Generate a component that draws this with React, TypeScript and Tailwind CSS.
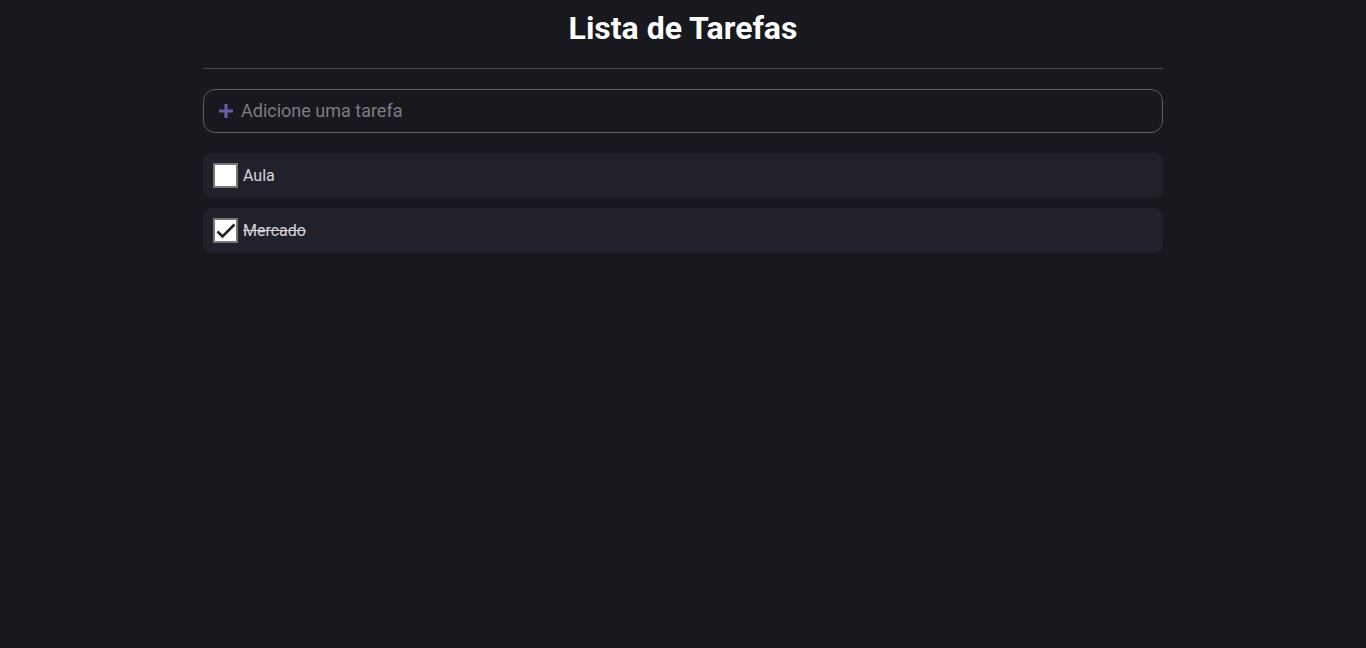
import { useState } from 'react';

type Tarefa = { id: number; texto: string; feita: boolean };

export default function App() {
  const [tarefas, setTarefas] = useState<Tarefa[]>([
    { id: 1, texto: 'Aula', feita: false },
    { id: 2, texto: 'Mercado', feita: true },
  ]);
  const [nova, setNova] = useState('');

  const alternar = (id: number) =>
    setTarefas(tarefas.map((t) => (t.id === id ? { ...t, feita: !t.feita } : t)));

  const adicionar = (e: React.FormEvent) => {
    e.preventDefault();
    if (!nova.trim()) return;
    setTarefas([...tarefas, { id: Date.now(), texto: nova, feita: false }]);
    setNova('');
  };

  return (
    <div className="min-h-screen bg-[#18181f] font-['Roboto',sans-serif]">
      <div className="mx-auto w-[960px]">
        <h1 className="pt-[8px] pb-[19px] text-center text-[32px] font-bold leading-[41px] text-white">
          Lista de Tarefas
        </h1>
        <div className="h-px bg-[#46464c]" />

        <form
          onSubmit={adicionar}
          className="mt-5 flex h-[44px] items-center gap-[7px] rounded-xl border border-[#5c5c63] px-[14px]"
        >
          <svg width="16" height="16" viewBox="0 0 16 16" className="shrink-0">
            <path d="M8 1v14M1 8h14" stroke="#6e5ca8" strokeWidth="3" />
          </svg>
          <input
            value={nova}
            onChange={(e) => setNova(e.target.value)}
            placeholder="Adicione uma tarefa"
            className="flex-1 bg-transparent text-lg text-[#d4d4d8] placeholder-[#7c7c85] outline-none"
          />
        </form>

        <ul className="mt-5 space-y-[10px]">
          {tarefas.map((t) => (
            <li
              key={t.id}
              className="flex h-[45px] items-center gap-[5px] rounded-lg bg-[#21212c] px-[10px]"
            >
              <button
                onClick={() => alternar(t.id)}
                className="flex h-[25px] w-[25px] items-center justify-center border-[2.5px] border-[#767676] bg-white"
              >
                {t.feita && (
                  <svg width="20" height="20" viewBox="0 0 20 20">
                    <path d="M1.5 10.5l5 5L18.5 3.5" fill="none" stroke="#222" strokeWidth="2.6" />
                  </svg>
                )}
              </button>
              <span className={`text-base text-[#d4d4d8] ${t.feita ? 'line-through' : ''}`}>
                {t.texto}
              </span>
            </li>
          ))}
        </ul>
      </div>
    </div>
  );
}
